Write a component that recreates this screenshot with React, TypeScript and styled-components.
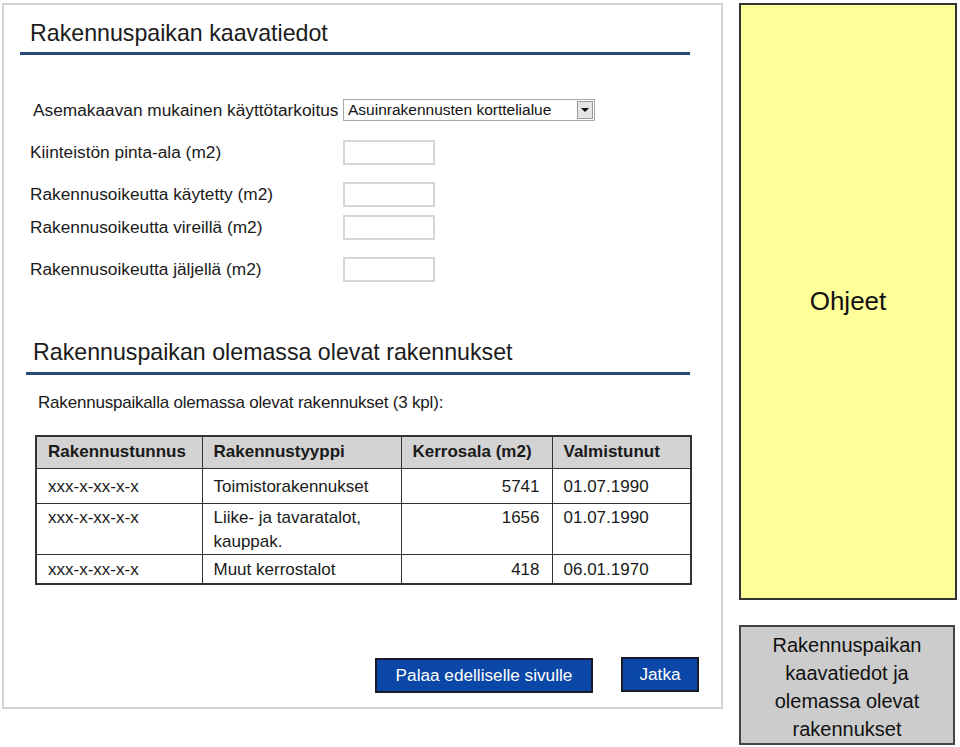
import React from "react";
import styled, { createGlobalStyle } from "styled-components";

const Global = createGlobalStyle`
  html, body { margin: 0; padding: 0; background: #ffffff; }
  body { font-family: "Liberation Sans", Arial, Helvetica, sans-serif; color: #1a1a1a; }
  * { box-sizing: border-box; }
`;

const Page = styled.div`
  display: flex;
  align-items: flex-start;
  padding: 3px 0 0 2px;
  width: 960px;
  height: 747px;
`;

const MainPanel = styled.div`
  width: 721px;
  height: 706px;
  border: 2px solid #d3d3d3;
  display: flex;
  flex-direction: column;
`;

const SectionHead = styled.div<{ $top: number }>`
  margin-top: ${(p) => p.$top}px;
  display: flex;
  flex-direction: column;
`;

const SectionTitle = styled.h1<{ $left: number }>`
  margin: 0 0 0 ${(p) => p.$left}px;
  font-size: 23.2px;
  line-height: 26px;
  font-weight: normal;
  color: #1a1a1a;
`;

const Rule = styled.div<{ $left: number; $width: number; $top: number }>`
  margin: ${(p) => p.$top}px 0 0 ${(p) => p.$left}px;
  width: ${(p) => p.$width}px;
  height: 3px;
  background: #274a7b;
`;

const FormRow = styled.div<{ $top: number; $h: number }>`
  margin: ${(p) => p.$top}px 0 0 26px;
  display: grid;
  grid-template-columns: 313px auto;
  align-items: center;
  height: ${(p) => p.$h}px;
`;

const Label = styled.span<{ $indent?: number }>`
  font-size: 17.3px;
  padding-left: ${(p) => p.$indent ?? 0}px;
  white-space: nowrap;
`;

const SelectBox = styled.div`
  width: 252px;
  height: 22px;
  border: 1px solid #a9a9a9;
  background: #fff;
  display: flex;
  align-items: center;
  justify-content: space-between;
  padding: 0 1px 0 4px;
  font-size: 15.5px;
  color: #111;
`;

const ArrowBtn = styled.span`
  width: 16px;
  height: 18px;
  border: 1px solid #9a9a9a;
  background: #e4e4e4;
  display: flex;
  align-items: center;
  justify-content: center;
`;

const Arrow = styled.span`
  width: 0;
  height: 0;
  border-left: 4px solid transparent;
  border-right: 4px solid transparent;
  border-top: 4px solid #111;
`;

const NumInput = styled.input`
  width: 92px;
  height: 25px;
  border: 2px solid #d6d6d6;
  background: #fff;
  outline: none;
  padding: 0;
`;

const SubText = styled.p`
  margin: 18px 0 0 34px;
  font-size: 17px;
  line-height: 20px;
  letter-spacing: -0.2px;
`;

const Table = styled.table`
  margin: 22px 0 0 31px;
  width: 655px;
  border-collapse: collapse;
  table-layout: fixed;
  border: 2px solid #333;
  font-size: 17px;
`;

const HeadCell = styled.th`
  background: #d3d3d3;
  border: 1px solid #333;
  font-weight: bold;
  text-align: left;
  padding: 0 0 0 11px;
  height: 32px;
  vertical-align: middle;
  white-space: nowrap;
`;

const BodyRow = styled.tr<{ $h: number }>`
  height: ${(p) => p.$h}px;
`;

const Cell = styled.td<{ $pad: number; $num?: boolean }>`
  border: 1px solid #333;
  vertical-align: top;
  line-height: 24px;
  padding: ${(p) => p.$pad}px ${(p) => (p.$num ? 12 : 0)}px 0 ${(p) => (p.$num ? 0 : 11)}px;
  text-align: ${(p) => (p.$num ? "right" : "left")};
`;

const ButtonRow = styled.div`
  margin: 72px 0 0 371px;
  display: flex;
  align-items: flex-start;
  gap: 28px;
`;

const BlueButton = styled.button<{ $w: number; $offset?: number }>`
  width: ${(p) => p.$w}px;
  height: 35px;
  margin-top: ${(p) => p.$offset ?? 0}px;
  background: #0a47a6;
  border: 2px solid #1b1b2b;
  color: #ffffff;
  font-family: "Liberation Sans", Arial, sans-serif;
  font-size: 17.2px;
  padding: 0;
  cursor: pointer;
`;

const SideColumn = styled.div`
  margin-left: 16px;
  width: 218px;
  display: flex;
  flex-direction: column;
  gap: 25px;
`;

const HelpBox = styled.div`
  height: 597px;
  background: #ffff99;
  border: 2px solid #333;
  display: flex;
  align-items: center;
  justify-content: center;
  font-size: 26px;
  color: #111;
`;

const PageNameBox = styled.div`
  width: 216px;
  height: 120px;
  background: #cccccc;
  border: 2px solid #444;
  padding-top: 4px;
  text-align: center;
  font-size: 20px;
  line-height: 28px;
  color: #111;
`;

const rows = [
  { id: "xxx-x-xx-x-x", type: ["Toimistorakennukset"], area: "5741", date: "01.07.1990", h: 35, pad: 6 },
  { id: "xxx-x-xx-x-x", type: ["Liike- ja tavaratalot,", "kauppak."], area: "1656", date: "01.07.1990", h: 51, pad: 2 },
  { id: "xxx-x-xx-x-x", type: ["Muut kerrostalot"], area: "418", date: "06.01.1970", h: 30, pad: 3 },
];

const fields = [
  { label: "Kiinteistön pinta-ala (m2)", top: 19 },
  { label: "Rakennusoikeutta käytetty (m2)", top: 17 },
  { label: "Rakennusoikeutta vireillä (m2)", top: 8 },
  { label: "Rakennusoikeutta jäljellä (m2)", top: 17 },
];

export default function App() {
  return (
    <>
      <Global />
      <Page>
        <MainPanel>
          <SectionHead $top={15}>
            <SectionTitle $left={26}>Rakennuspaikan kaavatiedot</SectionTitle>
            <Rule $left={16} $width={670} $top={6} />
          </SectionHead>

          <FormRow $top={44} $h={22}>
            <Label $indent={3}>Asemakaavan mukainen käyttötarkoitus</Label>
            <SelectBox>
              <span>Asuinrakennusten korttelialue</span>
              <ArrowBtn>
                <Arrow />
              </ArrowBtn>
            </SelectBox>
          </FormRow>

          {fields.map((f) => (
            <FormRow key={f.label} $top={f.top} $h={25}>
              <Label>{f.label}</Label>
              <NumInput type="text" />
            </FormRow>
          ))}

          <SectionHead $top={57}>
            <SectionTitle $left={29}>Rakennuspaikan olemassa olevat rakennukset</SectionTitle>
            <Rule $left={22} $width={664} $top={7} />
          </SectionHead>

          <SubText>Rakennuspaikalla olemassa olevat rakennukset (3 kpl):</SubText>

          <Table>
            <colgroup>
              <col style={{ width: 166 }} />
              <col style={{ width: 199 }} />
              <col style={{ width: 151 }} />
              <col style={{ width: 139 }} />
            </colgroup>
            <thead>
              <tr>
                <HeadCell>Rakennustunnus</HeadCell>
                <HeadCell>Rakennustyyppi</HeadCell>
                <HeadCell>Kerrosala (m2)</HeadCell>
                <HeadCell>Valmistunut</HeadCell>
              </tr>
            </thead>
            <tbody>
              {rows.map((r, i) => (
                <BodyRow key={i} $h={r.h}>
                  <Cell $pad={r.pad}>{r.id}</Cell>
                  <Cell $pad={r.pad}>
                    {r.type.map((t, j) => (
                      <div key={j}>{t}</div>
                    ))}
                  </Cell>
                  <Cell $pad={r.pad} $num>
                    {r.area}
                  </Cell>
                  <Cell $pad={r.pad}>{r.date}</Cell>
                </BodyRow>
              ))}
            </tbody>
          </Table>

          <ButtonRow>
            <BlueButton $w={218} $offset={1}>Palaa edelliselle sivulle</BlueButton>
            <BlueButton $w={78}>Jatka</BlueButton>
          </ButtonRow>
        </MainPanel>

        <SideColumn>
          <HelpBox>Ohjeet</HelpBox>
          <PageNameBox>
            Rakennuspaikan
            <br />
            kaavatiedot ja
            <br />
            olemassa olevat
            <br />
            rakennukset
          </PageNameBox>
        </SideColumn>
      </Page>
    </>
  );
}
